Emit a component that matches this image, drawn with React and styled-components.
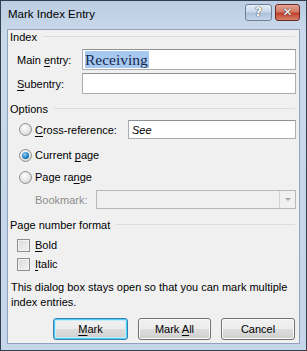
import React from 'react';
import styled, { createGlobalStyle } from 'styled-components';

const Global = createGlobalStyle`
  html, body { margin: 0; padding: 0; background: #ffffff; }
  * { box-sizing: border-box; }
`;

const Window = styled.div`
  width: 307px;
  height: 351px;
  display: flex;
  flex-direction: column;
  border: 1px solid #343f4d;
  background: linear-gradient(#bccde3, #c9d8ea 30px, #c6d6ea);
  padding: 0 6px 6px 6px;
  font-family: 'Liberation Sans', Arial, sans-serif;
  font-size: 11px;
  color: #000;
`;

const TitleBar = styled.div`
  height: 28px;
  display: flex;
  align-items: center;
  justify-content: space-between;
  padding: 0 0 3px 1px;
`;

const Title = styled.span`
  font-size: 11.5px;
  color: #000;
`;

const Caption = styled.div`
  display: flex;
  gap: 3px;
  margin-top: -3px;
`;

const CapButton = styled.div`
  width: ${(p) => p.w}px;
  height: 17px;
  border: 1px solid ${(p) => (p.close ? '#6b2a25' : '#6f7f94')};
  border-radius: 3px;
  display: flex;
  align-items: center;
  justify-content: center;
  background: ${(p) =>
    p.close
      ? 'linear-gradient(#e3a493, #d27a66 45%, #c3402d 55%, #d4806a)'
      : 'linear-gradient(#e6eef8, #c9d8ea 45%, #adc2dc 55%, #c3d5ea)'};
  color: #fff;
  font-family: 'DejaVu Sans', sans-serif;
  font-weight: bold;
  font-size: 12px;
  line-height: 1;
  text-shadow: 0 0 1px #333, 0 0 1px #333;
`;

const Body = styled.div`
  flex: 1;
  display: flex;
  flex-direction: column;
  background: #f0f0f0;
  border: 1px solid #8ea2bb;
  padding: 0 3px 0 2px;
`;

const Header = styled.div`
  display: flex;
  align-items: center;
  height: 13px;
  margin-top: ${(p) => p.mt || 0}px;
  &::after {
    content: '';
    flex: 1;
    height: 1px;
    background: #d5dde4;
    margin-left: 6px;
    margin-right: 1px;
  }
`;

const Row = styled.div`
  display: flex;
  align-items: center;
  height: ${(p) => p.h || 21}px;
  margin-top: ${(p) => p.mt || 0}px;
  padding-left: ${(p) => p.pl || 0}px;
`;

const Label = styled.span`
  width: ${(p) => (p.w ? `${p.w}px` : 'auto')};
  flex: none;
  color: ${(p) => (p.disabled ? '#8d8d8d' : '#000')};
`;

const TextBox = styled.div`
  flex: 1;
  align-self: stretch;
  background: #fff;
  border: 1px solid #abadb3;
  border-top-color: #8e9196;
  display: flex;
  align-items: center;
  padding-left: 2px;
`;

const Selected = styled.span`
  font-family: 'Liberation Serif', serif;
  font-size: 15.5px;
  background: #a7c9ef;
  color: #16284f;
  line-height: 17px;
  padding-right: 1px;
`;

const Italic = styled.span`
  font-style: italic;
  padding-left: 1px;
`;

const Radio = styled.span`
  width: 13px;
  height: 13px;
  border-radius: 50%;
  border: 1px solid #8f8f8f;
  background: radial-gradient(circle at 40% 35%, #ffffff, #dcdcdc 70%, #c8c8c8);
  display: inline-flex;
  align-items: center;
  justify-content: center;
  margin-right: 3px;
  flex: none;
  &::after {
    content: '';
    display: ${(p) => (p.checked ? 'block' : 'none')};
    width: 7px;
    height: 7px;
    border-radius: 50%;
    background: radial-gradient(circle at 40% 35%, #8ad1f5, #1c79b8 60%, #0d4f86);
  }
`;

const Check = styled.span`
  width: 13px;
  height: 13px;
  border: 1px solid #8f8f8f;
  background: linear-gradient(135deg, #d9d9d9, #f4f4f4);
  box-shadow: inset 0 0 0 1px #f2f2f2;
  margin-right: 5px;
  flex: none;
`;

const Select = styled.div`
  flex: 1;
  align-self: stretch;
  border: 1px solid #b8b8b8;
  background: #f0f0f0;
  display: flex;
  justify-content: flex-end;
`;

const Arrow = styled.div`
  width: 16px;
  border-left: 1px solid #d2d2d2;
  display: flex;
  align-items: center;
  justify-content: center;
  &::after {
    content: '';
    border-left: 3px solid transparent;
    border-right: 3px solid transparent;
    border-top: 3px solid #a8a8a8;
  }
`;

const Note = styled.p`
  margin: 8px 0 0 1px;
  line-height: 15px;
`;

const Buttons = styled.div`
  display: flex;
  justify-content: flex-end;
  gap: 10px;
  margin-top: 8px;
  padding-right: 1px;
`;

const Button = styled.div`
  width: ${(p) => p.w}px;
  height: 22px;
  border: 1px solid ${(p) => (p.def ? '#3c7fb1' : '#707070')};
  border-radius: 3px;
  background: linear-gradient(#f2f2f2, #ebebeb 50%, #dddddd 51%, #cfcfcf);
  box-shadow: ${(p) => (p.def ? 'inset 0 0 0 1px #48d0f8, inset 0 0 0 2px #c5eefb' : 'inset 0 0 0 1px #fbfbfb')};
  display: flex;
  align-items: center;
  justify-content: center;
`;

const U = styled.span`
  text-decoration: underline;
  text-underline-offset: 2px;
`;

export default function App() {
  return (
    <>
      <Global />
      <Window>
        <TitleBar>
          <Title>Mark Index Entry</Title>
          <Caption>
            <CapButton w={27}>?</CapButton>
            <CapButton w={25} close>✕</CapButton>
          </Caption>
        </TitleBar>
        <Body>
          <Header mt={0}>Index</Header>
          <Row mt={6} pl={7}>
            <Label w={65}>Main <U>e</U>ntry:</Label>
            <TextBox>
              <Selected>Receiving</Selected>
            </TextBox>
          </Row>
          <Row mt={3} pl={7}>
            <Label w={65}>
              <U>S</U>ubentry:
            </Label>
            <TextBox />
          </Row>
          <Header mt={8}>Options</Header>
          <Row mt={5} pl={9} h={19}>
            <Radio />
            <Label w={93}>
              <U>C</U>ross-reference:
            </Label>
            <TextBox>
              <Italic>See</Italic>
            </TextBox>
          </Row>
          <Row mt={8} pl={9} h={16}>
            <Radio checked />
            <Label>
              Current <U>p</U>age
            </Label>
          </Row>
          <Row mt={6} pl={9} h={16}>
            <Radio />
            <Label>
              Page ra<U>n</U>ge
            </Label>
          </Row>
          <Row mt={5} pl={25} h={19}>
            <Label w={61} disabled>
              Bookmark:
            </Label>
            <Select>
              <Arrow />
            </Select>
          </Row>
          <Header mt={9}>Page number format</Header>
          <Row mt={6} pl={7} h={16}>
            <Check />
            <Label>
              <U>B</U>old
            </Label>
          </Row>
          <Row mt={3} pl={7} h={16}>
            <Check />
            <Label>
              <U>I</U>talic
            </Label>
          </Row>
          <Note>
            This dialog box stays open so that you can mark multiple index entries.
          </Note>
          <Buttons>
            <Button w={75} def>
              <span>
                <U>M</U>ark
              </span>
            </Button>
            <Button w={73}>
              <span>
                Mark <U>A</U>ll
              </span>
            </Button>
            <Button w={74}>Cancel</Button>
          </Buttons>
        </Body>
      </Window>
    </>
  );
}
